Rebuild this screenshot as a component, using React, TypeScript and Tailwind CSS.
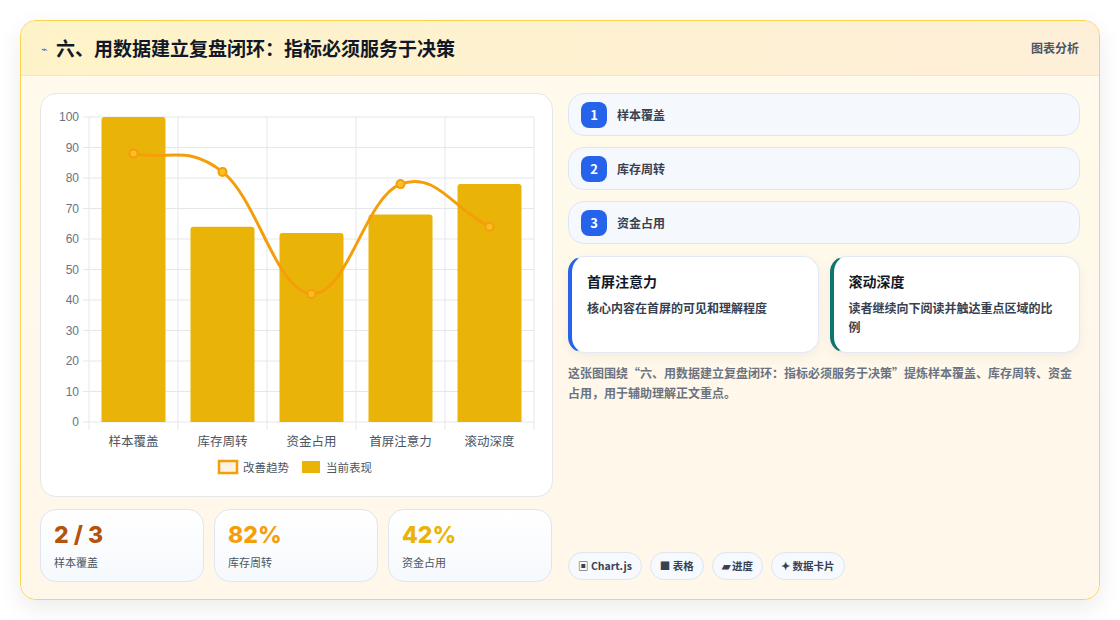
import React from "react";

const cats = ["样本覆盖", "库存周转", "资金占用", "首屏注意力", "滚动深度"];
const bars = [100, 64, 62, 68, 78];
const line = [88, 82, 42, 78, 64];

function Chart() {
  const x0 = 48, x1 = 493, y0 = 23, y1 = 328;
  const cw = (x1 - x0) / 5;
  const yv = (v: number) => y1 - (v / 100) * (y1 - y0);
  const pts = line.map((v, i) => [x0 + cw * (i + 0.5), yv(v)]);
  let d = `M${pts[0][0]},${pts[0][1]}`;
  for (let i = 0; i < pts.length - 1; i++) {
    const [ax, ay] = pts[i], [bx, by] = pts[i + 1];
    const t = cw * 0.4;
    const prev = pts[i - 1] || pts[i];
    const next = pts[i + 2] || pts[i + 1];
    const s1 = (by - prev[1]) / ((bx - prev[0]) || 1);
    const s2 = (next[1] - ay) / ((next[0] - ax) || 1);
    d += ` C${ax + t},${ay + s1 * t} ${bx - t},${by - s2 * t} ${bx},${by}`;
  }
  return (
    <svg width="512" height="403" className="block">
      {Array.from({ length: 11 }).map((_, i) => {
        const y = yv(i * 10);
        return (
          <g key={i}>
            <line x1={x0 - 6} x2={x1} y1={y} y2={y} stroke="#e5e7eb" />
            <text x={x0 - 10} y={y + 4} textAnchor="end" fontSize="12" fill="#6b7280" fontFamily="Liberation Sans, Noto Sans CJK SC, sans-serif">{i * 10}</text>
          </g>
        );
      })}
      {Array.from({ length: 6 }).map((_, i) => (
        <line key={i} x1={x0 + cw * i} x2={x0 + cw * i} y1={y0} y2={y1 + 8} stroke="#e5e7eb" />
      ))}
      {bars.map((v, i) => (
        <path key={i} d={`M${x0 + cw * i + 12.5},${y1} V${yv(v) + 3} q0,-3 3,-3 H${x0 + cw * (i + 1) - 15.5} q3,0 3,3 V${y1} Z`} fill="#eab308" />
      ))}
      <path d={d} fill="none" stroke="#f59e0b" strokeWidth="3" />
      {pts.map(([x, y], i) => (
        <circle key={i} cx={x} cy={y} r="4" fill="#fbbf24" stroke="#f59e0b" strokeWidth="2" />
      ))}
      {cats.map((c, i) => (
        <text key={c} x={x0 + cw * (i + 0.5)} y={352} textAnchor="middle" fontSize="12.5" fill="#4b5563" fontFamily="Noto Sans CJK SC, sans-serif">{c}</text>
      ))}
      <rect x="178" y="367" width="18" height="12" fill="#fef3e2" stroke="#f59e0b" strokeWidth="2.5" />
      <text x="202" y="378" fontSize="11.5" fill="#4b5563" fontFamily="Noto Sans CJK SC, sans-serif">改善趋势</text>
      <rect x="261" y="367" width="18" height="12" fill="#eab308" />
      <text x="285" y="378" fontSize="11.5" fill="#4b5563" fontFamily="Noto Sans CJK SC, sans-serif">当前表现</text>
    </svg>
  );
}

export default function App() {
  const font = { fontFamily: "'Noto Sans CJK SC', 'Noto Sans', sans-serif" };
  return (
    <div style={font} className="w-[1120px] h-[620px] bg-white pt-5 px-5">
      <div className="w-[1080px] h-[580px] rounded-2xl border border-[#fcd34d] bg-[#fff8e8] shadow-[0_8px_24px_rgba(0,0,0,0.08)] overflow-hidden flex flex-col">
        <div className="h-[55px] shrink-0 flex items-center justify-between px-5 bg-gradient-to-r from-[#fef3c8] to-[#feefd9] border-b border-[#fde7b0]">
          <div className="flex items-center gap-2">
            <span className="text-[11px] text-[#4f6bd8]">⌁</span>
            <span className="text-[19px] font-bold text-[#111827]">六、用数据建立复盘闭环：指标必须服务于决策</span>
          </div>
          <span className="text-[12px] font-bold text-[#4b5563]">图表分析</span>
        </div>
        <div className="flex-1 flex gap-[15px] px-[19px] pt-[17px] bg-gradient-to-b from-[#fffaeb] to-[#fff7ea]">
          <div className="w-[513px] flex flex-col gap-3">
            <div className="h-[404px] bg-white rounded-2xl border border-[#e5e7eb]">
              <Chart />
            </div>
            <div className="flex gap-[10px]">
              {[
                ["2 / 3", "样本覆盖", "#b45309"],
                ["82%", "库存周转", "#f59e0b"],
                ["42%", "资金占用", "#eab308"],
              ].map(([v, l, c]) => (
                <div key={l} className="w-[164px] h-[73px] rounded-2xl border border-[#dfe6f0] bg-gradient-to-b from-white to-[#f6f9fd] px-[13px] pt-[10px]">
                  <div className="text-[23px] font-extrabold leading-[30px]" style={{ color: c, fontFamily: "Inter, 'Noto Sans CJK SC', sans-serif" }}>{v}</div>
                  <div className="text-[11px] text-[#4b5563] mt-1">{l}</div>
                </div>
              ))}
            </div>
          </div>
          <div className="w-[514px] flex flex-col">
            {["样本覆盖", "库存周转", "资金占用"].map((t, i) => (
              <div key={t} className="h-[43px] mb-[11px] rounded-2xl border border-[#dbe6f3] bg-[#f5f9fd] flex items-center px-3 gap-[10px]">
                <span className="w-[26px] h-[26px] rounded-lg bg-[#2563eb] text-white text-[13px] font-bold flex items-center justify-center">{i + 1}</span>
                <span className="text-[12px] font-bold text-[#374151]">{t}</span>
              </div>
            ))}
            <div className="flex gap-[11px] mt-[1px]">
              <div className="flex-1 h-[97px] rounded-2xl bg-white border border-[#e3e9f2] border-l-4 border-l-[#2563eb] px-[15px] pt-[14px] shadow-[0_4px_12px_rgba(0,0,0,0.05)]">
                <div className="text-[14px] font-bold text-[#111827]">首屏注意力</div>
                <div className="text-[12px] font-bold text-[#374151] mt-[6px] leading-[19px]">核心内容在首屏的可见和理解程度</div>
              </div>
              <div className="flex-1 h-[97px] rounded-2xl bg-white border border-[#e3e9f2] border-l-4 border-l-[#0f766e] px-[15px] pt-[14px] shadow-[0_4px_12px_rgba(0,0,0,0.05)]">
                <div className="text-[14px] font-bold text-[#111827]">滚动深度</div>
                <div className="text-[12px] font-bold text-[#374151] mt-[6px] leading-[19px]">读者继续向下阅读并触达重点区域的比例</div>
              </div>
            </div>
            <div className="text-[12px] font-bold text-[#6b7280] leading-[20px] mt-[10px]">这张图围绕“六、用数据建立复盘闭环：指标必须服务于决策”提炼样本覆盖、库存周转、资金占用，用于辅助理解正文重点。</div>
            <div className="flex-1" />
            <div className="flex gap-2 mb-[19px]">
              {["▣ Chart.js", "■ 表格", "▰ 进度", "✦ 数据卡片"].map((t) => (
                <span key={t} className="h-[28px] px-[9px] rounded-full border border-[#dfe6f0] bg-[#f6f9fd] text-[10.5px] font-bold text-[#374151] flex items-center">{t}</span>
              ))}
            </div>
          </div>
        </div>
      </div>
    </div>
  );
}
